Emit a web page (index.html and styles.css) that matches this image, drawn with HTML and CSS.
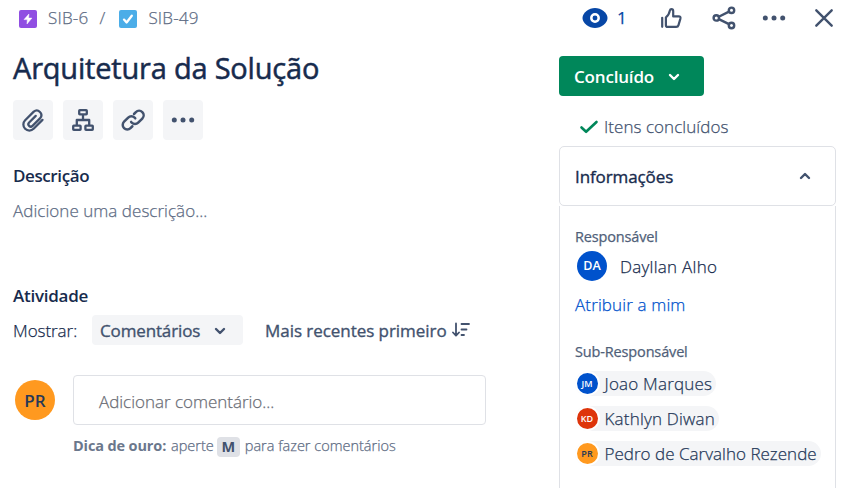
FILE: index.html
```html
<!DOCTYPE html>
<html lang="pt-BR">
<head>
<meta charset="utf-8">
<title>SIB-49 Arquitetura da Solução</title>
<link rel="stylesheet" href="styles.css">
</head>
<body>
<header class="topbar">
  <nav class="crumbs">
    <svg class="type" viewBox="0 0 18 18"><rect width="18" height="18" rx="2" fill="#904ee2"/><path d="M9.900 4 5 9.600h3.300L8 14l4.900-5.900H9.600z" fill="#fff" stroke="#fff" stroke-width=".5" stroke-linejoin="round"/></svg>
    <span class="key">SIB-6</span>
    <span class="slash">/</span>
    <svg class="type" viewBox="0 0 18 18"><rect width="18" height="18" rx="2" fill="#4bade8"/><path d="m5 9.600 2.600 2.900 5.200-6.800" fill="none" stroke="#fff" stroke-width="2.300" stroke-linecap="round" stroke-linejoin="round"/></svg>
    <span class="key">SIB-49</span>
  </nav>
  <div class="actions">
    <svg class="ic eye" viewBox="0 0 30 30"><path d="M15 5C9 5 2.500 9.800 2.500 15S9 25 15 25s12.500-4.800 12.500-10S21 5 15 5z" fill="#0747a6"/><circle cx="15" cy="15" r="3.700" fill="none" stroke="#fff" stroke-width="2.500"/></svg>
    <span class="count">1</span>
    <svg class="ic like" viewBox="0 0 30 30" fill="none" stroke="#42526e" stroke-width="2.200" stroke-linejoin="round" stroke-linecap="round"><path d="M6.200 14.800v9"/><path d="M9.900 14.300v7.900q0 1.700 1.700 1.700h8.600q1.800 0 2.300-1.800l1.900-6.500q.5-2.200-1.700-2.200h-5.500V8q0-1.900-1.800-1.900-1.200 0-1.500 1.300c-.6 3.300-1.600 5.200-4 6.900z"/></svg>
    <svg class="ic share" viewBox="0 0 30 30" fill="none" stroke="#42526e" stroke-width="2.400"><circle cx="7.300" cy="14.900" r="2.700"/><circle cx="22.500" cy="7.300" r="2.700"/><circle cx="22.500" cy="22.500" r="2.700"/><path d="M9.800 13.700 20 8.600M9.800 16.200 20 21.200"/></svg>
    <svg class="ic more" viewBox="0 0 30 30" fill="#42526e"><circle cx="6.300" cy="15" r="2.500"/><circle cx="15" cy="15" r="2.500"/><circle cx="23.700" cy="15" r="2.500"/></svg>
    <svg class="ic close" viewBox="0 0 30 30" fill="none" stroke="#42526e" stroke-width="2.400" stroke-linecap="round"><path d="m7.300 7.300 15.400 15.400M22.700 7.300 7.300 22.700"/></svg>
  </div>
</header>
<main class="issue">
  <section class="left">
    <h1>Arquitetura da Solução</h1>
    <div class="tools">
      <button><svg class="ic" viewBox="0 0 24 24" fill="none" stroke="#42526e" stroke-width="1.800" stroke-linecap="round" stroke-linejoin="round"><path d="m19.600 11.900-7.100 7.100a4.800 4.800 0 0 1-6.800-6.800l6.900-6.900a3.700 3.700 0 0 1 5.200 5.200l-6.200 6.200a1.900 1.900 0 0 1-2.700-2.700l5.300-5.300"/></svg></button>
      <button><svg class="ic" viewBox="0 0 30 30" fill="none" stroke="#42526e" stroke-width="2.300" stroke-linejoin="round"><rect x="11.200" y="5.200" width="7.600" height="4.200" rx=".6"/><rect x="5.200" y="20.600" width="7.400" height="4.200" rx=".6"/><rect x="17.400" y="20.600" width="7.400" height="4.200" rx=".6"/><path d="M15 9.500v5.500M8.800 20.500V15h12.400v5.500"/></svg></button>
      <button><svg class="ic" viewBox="0 0 24 24" fill="none" stroke="#42526e" stroke-width="2" stroke-linecap="round"><path d="m12.800 7.200 1.500-1.500a3.640 3.640 0 0 1 5.150 5.150l-3.300 3.300a3.640 3.640 0 0 1-5.150 0l-.5-.6"/><path d="m11.500 17-1.500 1.500a3.640 3.640 0 0 1-5.150-5.150l3.300-3.300a3.640 3.640 0 0 1 5.150 0l.5.6"/></svg></button>
      <button><svg class="ic" viewBox="0 0 30 30" fill="#42526e"><circle cx="6.300" cy="15" r="2.500"/><circle cx="15" cy="15" r="2.500"/><circle cx="23.700" cy="15" r="2.500"/></svg></button>
    </div>
    <h2>Descrição</h2>
    <p class="placeholder">Adicione uma descrição...</p>
    <h2 class="activity">Atividade</h2>
    <div class="filters">
      <span class="show">Mostrar:</span>
      <button class="select">Comentários<svg class="chev" viewBox="0 0 12 8"><path d="m2 2 4 4 4-4"/></svg></button>
      <button class="sort">Mais recentes primeiro<svg class="sorticon" viewBox="0 0 18 16"><path d="M4 1.500v12M1 10.500l3 3.200 3-3.200M9.500 2h7.500M9.500 7.500h5M9.500 13h2.500"/></svg></button>
    </div>
    <div class="composer">
      <span class="avatar me">PR</span>
      <div class="field">Adicionar comentário...</div>
    </div>
    <p class="hint"><b>Dica de ouro:</b><span>aperte</span><kbd>M</kbd><span>para fazer comentários</span></p>
  </section>
  <aside class="right">
    <button class="status">Concluído<svg class="chev" viewBox="0 0 12 8"><path d="m2 2 4 4 4-4"/></svg></button>
    <div class="done"><svg viewBox="0 0 20 14"><path d="m2.500 7.500 4.600 4.300L17.500 2"/></svg>Itens concluídos</div>
    <div class="panelhead"><span>Informações</span><svg class="chev" viewBox="0 0 12 8"><path d="m2 6 4-4 4 4"/></svg></div>
    <div class="panelbody">
      <h3>Responsável</h3>
      <div class="assignee"><span class="avatar da">DA</span><span class="name">Dayllan Alho</span></div>
      <a class="assign">Atribuir a mim</a>
      <h3>Sub-Responsável</h3>
      <div class="chips">
        <div class="chip"><span class="avatar small blue">JM</span><span>Joao Marques</span></div>
        <div class="chip"><span class="avatar small red">KD</span><span>Kathlyn Diwan</span></div>
        <div class="chip"><span class="avatar small orange">PR</span><span class="long">Pedro de Carvalho Rezende</span></div>
      </div>
    </div>
  </aside>
</main>
</body>
</html>
```
FILE: styles.css
```css
* { box-sizing: border-box; }
html, body { height: 100%; }
body {
  margin: 0;
  overflow: hidden;
  background: #fff;
  color: #172b4d;
  font: 300 17px/24px "Open Sans", "Noto Sans", sans-serif;
  white-space: nowrap;
  -webkit-text-stroke: .25px;
}
h1, h2, h3, p { margin: 0; }
button { border: 0; padding: 0; font: inherit; color: inherit; letter-spacing: inherit; background: none; }
svg { display: block; flex: none; }
.ic { width: 30px; height: 30px; }

.topbar { display: flex; justify-content: space-between; height: 37px; padding: 0 20px 1px 19px; }
.crumbs, .actions { display: flex; align-items: center; }
.crumbs { color: #5e6c84; }
.type { width: 18px; height: 18px; margin-top: 1px; }
.key { margin-left: 11px; letter-spacing: .2px; }
.slash { width: 7px; margin: 0 13px 0 11px; }
.count { width: 9px; margin-left: 7px; font-weight: 500; color: #0747a6; }
.like { margin-left: 30px; }
.share { margin-left: 23px; }
.more, .close { margin-left: 20px; }

.issue { display: flex; height: 451px; padding: 11px 23px 0 13px; justify-content: space-between; }
.left { width: 473px; }
h1 { font-size: 29px; line-height: 40px; font-weight: 500; letter-spacing: -.2px; -webkit-text-stroke: .5px; }
.tools { display: flex; gap: 10px; margin-top: 12px; }
.tools button {
  display: flex; align-items: center; justify-content: center;
  width: 40px; height: 40px; border-radius: 4px; background: #f4f5f7;
}
h2 { margin-top: 24px; font-size: 17px; line-height: 24px; font-weight: 600; letter-spacing: -.4px; -webkit-text-stroke: 0; }
.placeholder { margin-top: 11px; color: #5e6c84; letter-spacing: .04px; }
.activity { margin-top: 61px; letter-spacing: -.25px; }
.filters { display: flex; align-items: center; height: 30px; margin-top: 7px; color: #42526e; font-weight: 500; -webkit-text-stroke: .35px; }
.show { width: 79px; padding-top: 2px; font-weight: 300; color: #172b4d; letter-spacing: -.05px; -webkit-text-stroke: .25px; }
.select { display: flex; align-items: center; width: 151px; height: 30px; padding: 1px 0 0 8px; border-radius: 4px; background: #f4f5f7; letter-spacing: -.14px; }
.chev { width: 12px; height: 8px; fill: none; stroke: #42526e; stroke-width: 2.4; stroke-linecap: round; stroke-linejoin: round; }
.select .chev { margin-left: 14px; }
.sort { display: flex; align-items: center; margin-left: 22px; padding-top: 1px; letter-spacing: -.05px; }
.sorticon { width: 18px; height: 16px; margin: -2px 0 0 5px; fill: none; stroke: #42526e; stroke-width: 1.8; stroke-linecap: round; stroke-linejoin: round; }
.composer { display: flex; align-items: center; margin-top: 30px; padding-left: 2px; }
.avatar {
  display: flex; flex: none; align-items: center; justify-content: center;
  border-radius: 50%; color: #fff; font-weight: 600; line-height: 1; letter-spacing: 0; -webkit-text-stroke: 0;
}
.me { width: 40px; height: 40px; background: #ff991f; color: #253858; font-size: 17px; }
.field { flex: 1; height: 50px; margin-left: 18px; padding: 14px 25px 0; border: 1px solid #dfe1e6; border-radius: 4px; color: #6b6e76; letter-spacing: -.02px; }
.hint { display: flex; align-items: center; height: 20px; margin: 11px 0 0 60px; font-size: 14.5px; line-height: 20px; color: #5e6c84; }
.hint b { width: 98px; font-weight: 700; letter-spacing: -.13px; color: #6b778c; -webkit-text-stroke: 0; }
.hint kbd { width: 23px; height: 20px; margin: 2px 5px 0 3px; border-radius: 4px; background: #dfe1e6; color: #42526e; font: 700 14.5px/19px "Open Sans", sans-serif; text-align: center; -webkit-text-stroke: 0; }

.right { display: flex; flex-direction: column; width: 277px; }
.status { display: flex; align-items: center; width: 145px; height: 40px; margin-top: 8px; padding: 1px 0 0 15px; border-radius: 4px; background: #00875a; color: #fff; font-weight: 600; letter-spacing: -.18px; -webkit-text-stroke: 0; }
.status .chev { margin-left: 14px; stroke: #fff; }
.done { display: flex; align-items: center; height: 24px; margin: 19px 0 7px 20px; color: #42526e; letter-spacing: .05px; }
.done svg { width: 20px; height: 14px; margin-right: 5px; fill: none; stroke: #00875a; stroke-width: 2.6; stroke-linecap: round; stroke-linejoin: round; }
.panelhead { display: flex; flex: none; align-items: center; justify-content: space-between; height: 60px; padding: 0 24px 0 15px; border: 1px solid #dfe1e6; border-radius: 5px; font-weight: 500; letter-spacing: -.1px; -webkit-text-stroke: .35px; }
.panelhead span { padding-top: 2px; }
.panelbody { flex: 1; padding: 21px 15px 0; border: 1px solid #dfe1e6; border-width: 0 1px; }
h3 { font-size: 14.5px; line-height: 20px; font-weight: 500; letter-spacing: -.15px; color: #505f79; -webkit-text-stroke: .25px; }
.assignee { display: flex; align-items: center; height: 30px; margin: 4px 0 0 2px; }
.name { padding-top: 1px; letter-spacing: .27px; }
.da { width: 30px; height: 30px; margin-right: 13px; background: #0052cc; font-size: 12.5px; }
.assign { display: block; margin: 12px 0 25px; color: #0052cc; letter-spacing: .13px; }
.chips { display: flex; flex-direction: column; align-items: flex-start; gap: 10px; margin-top: 9px; }
.chip { display: flex; align-items: center; height: 25px; padding-right: 4px; border-radius: 13px; background: #f4f5f7; color: #253858; letter-spacing: .2px; }
.chip .long { letter-spacing: .02px; }
.small { width: 25px; height: 25px; margin: 0 5px 0 -.5px; border: 2.500px solid #fff; font-size: 9px; }
.blue { background: #0052cc; }
.red { background: #de350b; }
.orange { background: #ff991f; color: #253858; }
```
